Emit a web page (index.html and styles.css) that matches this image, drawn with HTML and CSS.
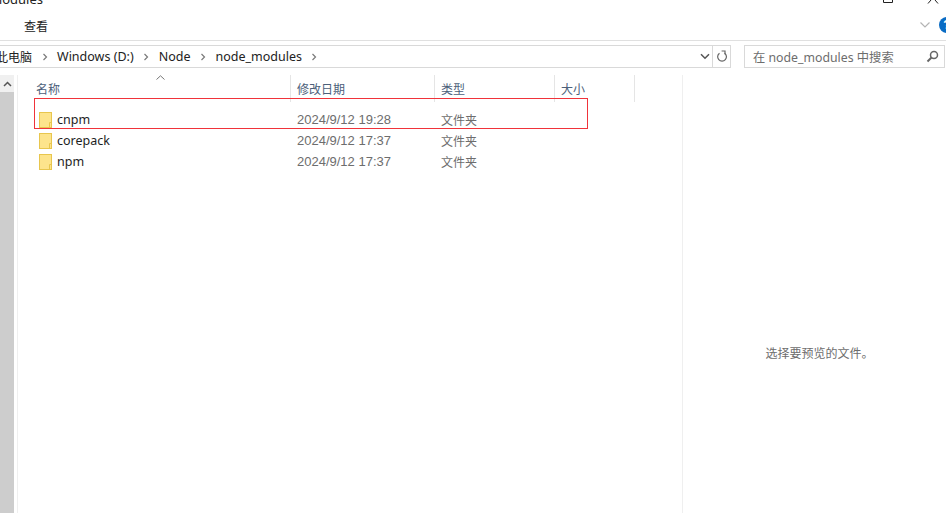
FILE: index.html
```html
<!DOCTYPE html>
<html lang="zh-CN">
<head>
<meta charset="utf-8">
<title>node_modules</title>
<link rel="stylesheet" href="styles.css">
</head>
<body>
<div class="window">
  <div class="titlebar">
    <span class="title">modules</span>
    <span class="winbtns">
      <svg class="maxbtn" width="12" height="4" viewBox="0 0 12 4"><path d="M1.5 0V2.5H10.5V0" fill="none" stroke="#222" stroke-width="1"/></svg>
      <svg class="closebtn" width="12" height="4" viewBox="0 0 12 4"><path d="M1 3.5L4 0M11 3.5L8 0" fill="none" stroke="#222" stroke-width="1"/></svg>
    </span>
  </div>
  <div class="ribbon">
    <span class="tab">查看</span>
    <span class="ribbon-right">
      <svg width="12" height="8" viewBox="0 0 12 8"><path d="M1.5 1.5L6 6L10.5 1.5" fill="none" stroke="#b4b4b4" stroke-width="1.2"/></svg>
      <span class="help">?</span>
    </span>
  </div>
  <div class="navbar">
    <div class="address">
      <div class="crumbs">
        <span class="crumb c0">此电脑</span><span class="chev"><svg width="6" height="8" viewBox="0 0 6 8"><path d="M1.5 1L4.5 4L1.5 7" fill="none" stroke="#7a7a7a" stroke-width="1.2"/></svg></span>
        <span class="crumb">Windows (D:)</span><span class="chev"><svg width="6" height="8" viewBox="0 0 6 8"><path d="M1.5 1L4.5 4L1.5 7" fill="none" stroke="#7a7a7a" stroke-width="1.2"/></svg></span>
        <span class="crumb">Node</span><span class="chev"><svg width="6" height="8" viewBox="0 0 6 8"><path d="M1.5 1L4.5 4L1.5 7" fill="none" stroke="#7a7a7a" stroke-width="1.2"/></svg></span>
        <span class="crumb">node_modules</span><span class="chev"><svg width="6" height="8" viewBox="0 0 6 8"><path d="M1.5 1L4.5 4L1.5 7" fill="none" stroke="#7a7a7a" stroke-width="1.2"/></svg></span>
      </div>
      <div class="dropdown"><svg width="10" height="7" viewBox="0 0 10 7"><path d="M1 1.2L5 5.2L9 1.2" fill="none" stroke="#555" stroke-width="1.5"/></svg></div>
      <div class="refresh"><svg width="12" height="13" viewBox="0 0 12 13"><path d="M3.5 3.2A4.4 4.4 0 1 0 8.6 3.2" fill="none" stroke="#666" stroke-width="1.2"/><path d="M2.6 1L6 1L6 4.2" fill="none" stroke="#666" stroke-width="1.2" transform="translate(3 0)"/></svg></div>
    </div>
    <div class="search">
      <span>在 node_modules 中搜索</span>
      <svg width="13" height="13" viewBox="0 0 13 13"><circle cx="8" cy="5" r="3.5" fill="none" stroke="#666" stroke-width="1.5"/><path d="M5.5 7.5L1.5 11.5" stroke="#666" stroke-width="2"/></svg>
    </div>
  </div>
  <div class="main">
    <div class="scrollbar">
      <div class="scroll-up"><svg width="9" height="6" viewBox="0 0 9 6"><path d="M1 5L4.5 1.5L8 5" fill="none" stroke="#555" stroke-width="1.5"/></svg></div>
      <div class="scroll-thumb"></div>
    </div>
    <div class="list">
      <svg class="sort" width="9" height="5" viewBox="0 0 9 5"><path d="M0.5 4.5L4.5 0.8L8.5 4.5" fill="none" stroke="#777" stroke-width="1"/></svg>
      <div class="header">
        <span class="col name">名称</span>
        <span class="col date">修改日期</span>
        <span class="col type">类型</span>
        <span class="col size">大小</span>
      </div>
      <div class="rows">
        <div class="row">
          <svg class="folder" width="13" height="16" viewBox="0 0 13 16"><rect x="0.5" y="0.5" width="12" height="15" fill="#fde48c" stroke="#e8c64e"/><path d="M10.5 15.5V10.5H12.5" fill="none" stroke="#e8c64e"/></svg>
          <span class="cell-name">cnpm</span><span class="cell-date">2024/9/12 19:28</span><span class="cell-type">文件夹</span>
        </div>
        <div class="row">
          <svg class="folder" width="13" height="16" viewBox="0 0 13 16"><rect x="0.5" y="0.5" width="12" height="15" fill="#fde48c" stroke="#e8c64e"/><path d="M10.5 15.5V10.5H12.5" fill="none" stroke="#e8c64e"/></svg>
          <span class="cell-name">corepack</span><span class="cell-date">2024/9/12 17:37</span><span class="cell-type">文件夹</span>
        </div>
        <div class="row">
          <svg class="folder" width="13" height="16" viewBox="0 0 13 16"><rect x="0.5" y="0.5" width="12" height="15" fill="#fde48c" stroke="#e8c64e"/><path d="M10.5 15.5V10.5H12.5" fill="none" stroke="#e8c64e"/></svg>
          <span class="cell-name">npm</span><span class="cell-date">2024/9/12 17:37</span><span class="cell-type">文件夹</span>
        </div>
      </div>
      <div class="highlight"></div>
    </div>
    <div class="preview">选择要预览的文件。</div>
  </div>
</div>
</body>
</html>
```
FILE: styles.css
```css
html, body { margin: 0; padding: 0; height: 100%; background: #fff; overflow: hidden; }
.window {
  width: 946px; height: 513px; display: flex; flex-direction: column; overflow: hidden;
  font-family: "Liberation Sans", "Noto Sans CJK SC", sans-serif; font-size: 13px; color: #222;
}
.titlebar { height: 8px; display: flex; justify-content: space-between; overflow: hidden; flex: none; }
.title { margin: -8px 0 0 -10px; line-height: 15px; font-family: "Noto Sans", "Noto Sans CJK SC", sans-serif; font-size: 13px; color: #222; }
.winbtns { display: flex; gap: 33px; margin-right: 7px; height: 4px; }
.ribbon { flex: none; height: 32px; display: flex; align-items: center; justify-content: space-between; border-bottom: 1px solid #e0e0e0; }
.tab { margin: 2px 0 0 24px; font-size: 12px; color: #222; }
.ribbon-right { display: flex; align-items: center; gap: 8px; margin: 2px -9px 0 0; }
.help { width: 16px; height: 16px; border-radius: 50%; background: #0a6cc4; color: #fff; font-size: 12px; font-weight: bold; text-align: center; line-height: 16px; }
.navbar { height: 23px; margin-top: 4px; flex: none; display: flex; gap: 13px; }
.address { width: 731px; flex: none; box-sizing: border-box; border: 1px solid #d9d9d9; border-left: 0; display: flex; align-items: center; }
.crumbs { flex: 1; display: flex; align-items: center; margin-left: -4px; font-family: "Noto Sans", "Noto Sans CJK SC", sans-serif; font-size: 12.5px; color: #222; overflow: hidden; }
.crumb { white-space: nowrap; }
.crumb.c0 { font-size: 12px; }
.chev { width: 25px; display: flex; justify-content: center; flex: none; }
.chev svg { display: block; }
.dropdown { width: 13px; display: flex; justify-content: center; flex: none; margin-right: 1px; }
.refresh { width: 17px; height: 21px; border-left: 1px solid #d9d9d9; display: flex; align-items: center; justify-content: center; flex: none; }
.search { width: 201px; flex: none; box-sizing: border-box; border: 1px solid #d9d9d9; display: flex; align-items: center; justify-content: space-between; padding: 0 5px 0 8px; font-family: "Noto Sans", "Noto Sans CJK SC", sans-serif; font-size: 12.3px; color: #6d6d6d; }
.main { flex: 1; display: flex; padding-top: 7px; min-height: 0; }
.scrollbar { width: 14px; flex: none; background: #cdcdcd; display: flex; flex-direction: column; }
.scroll-up { height: 17px; background: #f0f0f0; display: flex; align-items: center; justify-content: center; flex: none; }
.scroll-thumb { flex: 1; }
.list { width: 664px; flex: none; margin-left: 3px; border-left: 1px solid #efefef; position: relative; }
.sort { position: absolute; left: 138px; top: 0; }
.header { height: 27px; display: flex; color: #4c607a; font-size: 12px; }
.col { height: 27px; box-sizing: border-box; line-height: 26px; padding-top: 2px; flex: none; padding-left: 6px; border-right: 1px solid #e5e5e5; }
.col.name { width: 273px; padding-left: 18px; }
.col.date { width: 144px; }
.col.type { width: 120px; }
.col.size { width: 80px; }
.rows { margin-top: 7px; }
.row { height: 21px; display: flex; align-items: center; padding-left: 21px; }
.folder { flex: none; }
.cell-name { width: 240px; flex: none; margin-left: 5px; font-family: "Noto Sans", "Noto Sans CJK SC", sans-serif; font-size: 12.5px; color: #1e1e1e; }
.cell-date { width: 144px; flex: none; font-size: 13px; color: #6d6d6d; }
.cell-type { font-size: 12px; color: #6d6d6d; }
.highlight { position: absolute; left: 16px; top: 23px; width: 552px; height: 29px; border: 1px solid #f0333a; }
.preview { flex: 1; border-left: 1px solid #efefef; display: flex; align-items: center; justify-content: center; font-size: 12px; color: #6d6d6d; padding: 116px 0 0 10px; }
```
